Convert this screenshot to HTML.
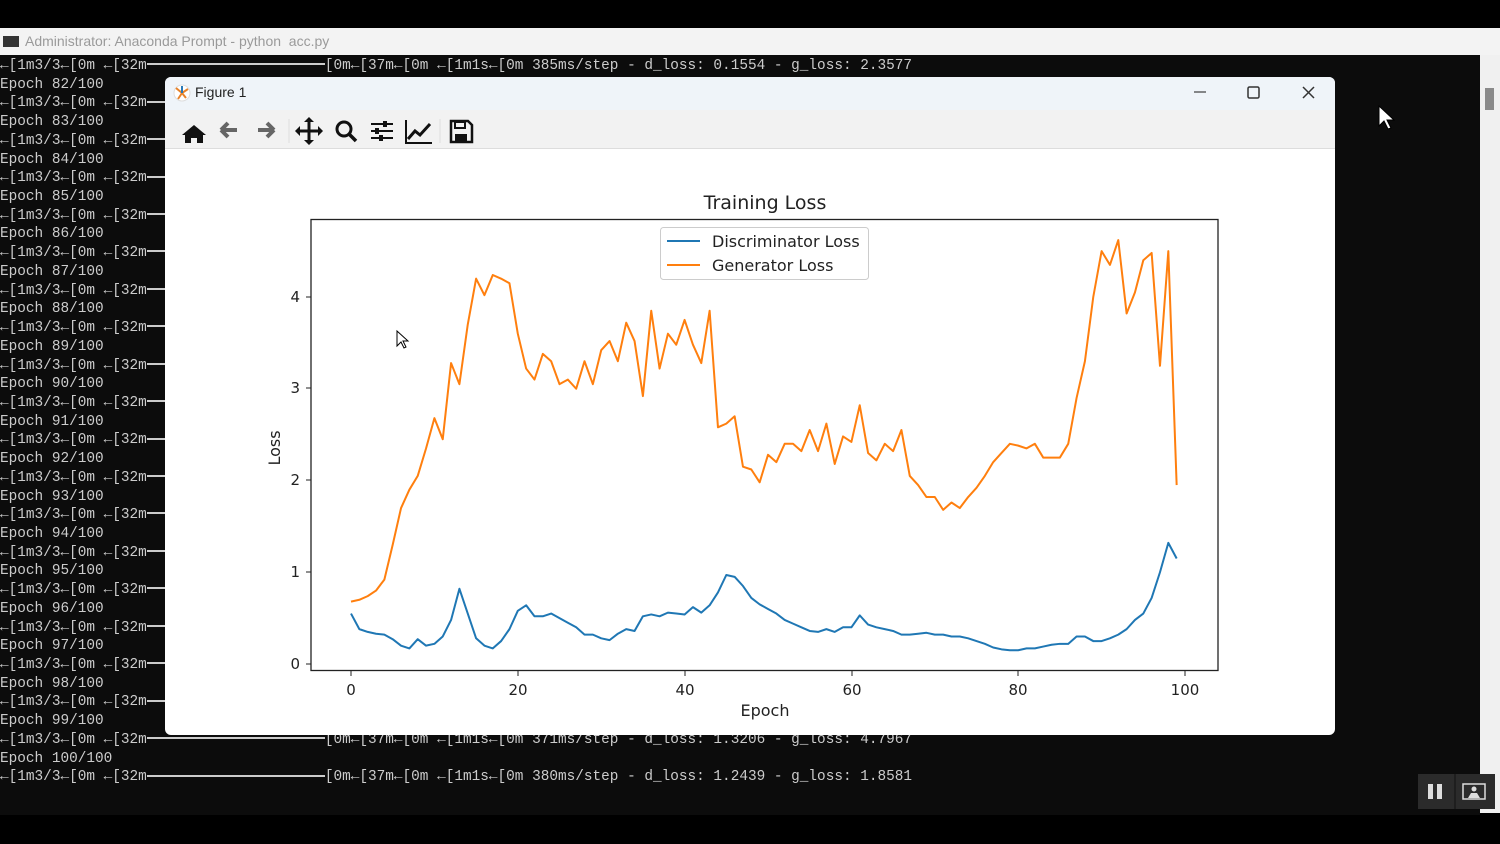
<!DOCTYPE html>
<html><head><meta charset="utf-8"><style>
*{margin:0;padding:0;box-sizing:border-box}
body{width:1500px;height:844px;background:#000;position:relative;overflow:hidden;font-family:"Liberation Sans",sans-serif}
#tb{position:absolute;left:0;top:28px;width:1500px;height:27px;background:#f3f3f3}
#tb .t{position:absolute;left:25px;top:5px;font-size:14px;color:#9a9a9a}
#tb .ic{position:absolute;left:3px;top:8px;width:16px;height:11px;background:#333}
#term{position:absolute;left:0;top:55px;width:1480px;height:760px;background:#0c0c0c}
#sb{position:absolute;left:1480px;top:55px;width:20px;height:758px;background:#f0f0f0}
#sb div{position:absolute;left:5px;top:33px;width:9px;height:22px;background:#8a8a8a}
.ln{position:absolute;left:0;font-family:"Liberation Mono",monospace;font-size:14.4px;color:#cccccc;white-space:pre;line-height:18px}
.bar{display:inline-block;width:178px;height:2px;background:#ccc;vertical-align:middle;margin-top:-2px}
#fig{position:absolute;left:165px;top:77px;width:1170px;height:658px;background:#fff;border-radius:6px;overflow:hidden}
#ft{height:33px;background:#eff4f9;position:relative}
#ft .n{position:absolute;left:30px;top:7px;font-size:14px;color:#222;font-family:"Liberation Sans",sans-serif}
#tool{height:39px;background:#f2f2f2;border-bottom:1px solid #ddd;position:relative}
.mono{font-family:"DejaVu Sans",sans-serif}
</style></head><body>
<div id="tb"><div class="ic"></div><div class="t">Administrator: Anaconda Prompt - python&nbsp; acc.py</div></div>
<div id="term"></div>
<div id="sb"><div></div></div>
<div id="lines"></div>
<script>
var h='';for(var i=0;i<39;i++){var y=57+i*18.72;var s;
if(i%2==1){s='Epoch '+(82+(i-1)/2)+'/100';}
else{var tail='';
if(i==0)tail='[0m←[37m←[0m ←[1m1s←[0m 385ms/step - d_loss: 0.1554 - g_loss: 2.3577';
else if(i==36)tail='[0m←[37m←[0m ←[1m1s←[0m 371ms/step - d_loss: 1.3206 - g_loss: 4.7967';
else if(i==38)tail='[0m←[37m←[0m ←[1m1s←[0m 380ms/step - d_loss: 1.2439 - g_loss: 1.8581';
s='←[1m3/3←[0m ←[32m<span class="bar"></span>'+tail;}
h+='<div class="ln" style="top:'+y+'px">'+s+'</div>';}
document.getElementById('lines').innerHTML=h;
</script>
<div id="fig">
<div id="ft"><svg style="position:absolute;left:8px;top:7px" width="18" height="18"><circle cx="9" cy="9" r="8" fill="#fff" stroke="#ddd"/><path d="M9 9L3 4M9 9L15 5M9 9L5 15M9 9L13 14" stroke="#e8832a" stroke-width="2"/><path d="M9 9L9 2" stroke="#2a7ab8" stroke-width="2"/></svg><div class="n">Figure 1</div>
<svg style="position:absolute;left:1027px;top:8px" width="130" height="18"><path d="M2 7h12" stroke="#444" stroke-width="1.2"/><rect x="56" y="2" width="11" height="11" rx="1.5" fill="none" stroke="#333" stroke-width="1.5"/><path d="M111 2l11 11M122 2l-11 11" stroke="#333" stroke-width="1.5"/></svg></div>
<div id="tool"><svg width="320" height="39">
<path d="M29 15l12 10h-3v8h-6v-5h-6v5h-6v-8h-3z" fill="#111"/>
<path d="M56 20h16M56 20l7-7M56 20l7 7" stroke="#666" stroke-width="4" fill="none"/>
<path d="M109 20h-16M109 20l-7-7M109 20l-7 7" stroke="#666" stroke-width="4" fill="none"/>
<line x1="124" y1="9" x2="124" y2="33" stroke="#ddd"/>
<path d="M144 9v24M132 21h24" stroke="#111" stroke-width="3"/><path d="M144 7l-5 5h10zM144 35l-5-5h10zM130 21l5-5v10zM158 21l-5-5v10z" fill="#111"/>
<circle cx="179" cy="19" r="7" fill="none" stroke="#111" stroke-width="3"/><path d="M184 24l7 7" stroke="#111" stroke-width="3.5"/>
<path d="M206 14h22M206 21h22M206 28h22" stroke="#111" stroke-width="2"/><rect x="218" y="11" width="4" height="6" fill="#111"/><rect x="210" y="18" width="4" height="6" fill="#111"/><rect x="214" y="25" width="4" height="6" fill="#111"/>
<path d="M241 10v23h26" stroke="#111" stroke-width="2" fill="none"/><path d="M243 29l7-8 5 4 10-11" stroke="#111" stroke-width="3" fill="none"/>
<line x1="275" y1="9" x2="275" y2="33" stroke="#ddd"/>
<path d="M286 11h17l4 4v17h-21z" fill="none" stroke="#111" stroke-width="2.5"/><rect x="290" y="12" width="10" height="6" fill="none" stroke="#111" stroke-width="2"/><rect x="290" y="24" width="12" height="7" fill="#111"/>
</svg></div>
</div>
<svg style="position:absolute;left:0;top:0" width="1500" height="844" class="mono">
<text x="765" y="209" font-size="19" text-anchor="middle" fill="#222">Training Loss</text>
<rect x="311" y="219.5" width="907" height="451" fill="none" stroke="#222" stroke-width="1.3"/>
<g font-size="15" fill="#222" text-anchor="middle">
<text x="351" y="695">0</text><text x="518" y="695">20</text><text x="685" y="695">40</text><text x="852" y="695">60</text><text x="1018" y="695">80</text><text x="1185" y="695">100</text>
</g>
<g stroke="#222"><path d="M351 671v5M518 671v5M685 671v5M852 671v5M1018 671v5M1185 671v5M311 664h-5M311 572h-5M311 480h-5M311 388h-5M311 297h-5"/></g>
<g font-size="15" fill="#222" text-anchor="end"><text x="300" y="669">0</text><text x="300" y="577">1</text><text x="300" y="485">2</text><text x="300" y="393">3</text><text x="300" y="302">4</text></g>
<text x="765" y="716" font-size="16" text-anchor="middle" fill="#222">Epoch</text>
<text transform="translate(280,448) rotate(-90)" font-size="16" text-anchor="middle" fill="#222">Loss</text>
<g transform="translate(351,664) scale(8.34,-91.75)" fill="none" stroke-width="2" stroke-linejoin="round">
<polyline vector-effect="non-scaling-stroke" stroke="#ff7f0e" points="0,0.68 1,0.7 2,0.74 3,0.8 4,0.92 5,1.3 6,1.7 7,1.9 8,2.05 9,2.35 10,2.68 11,2.45 12,3.28 13,3.05 14,3.7 15,4.2 16,4.02 17,4.24 18,4.2 19,4.15 20,3.6 21,3.22 22,3.1 23,3.38 24,3.3 25,3.05 26,3.1 27,3.0 28,3.3 29,3.05 30,3.42 31,3.52 32,3.3 33,3.72 34,3.52 35,2.92 36,3.85 37,3.22 38,3.6 39,3.48 40,3.75 41,3.48 42,3.28 43,3.85 44,2.58 45,2.62 46,2.7 47,2.15 48,2.12 49,1.98 50,2.28 51,2.2 52,2.4 53,2.4 54,2.32 55,2.55 56,2.32 57,2.62 58,2.18 59,2.48 60,2.42 61,2.82 62,2.3 63,2.22 64,2.4 65,2.32 66,2.55 67,2.05 68,1.95 69,1.82 70,1.82 71,1.68 72,1.76 73,1.7 74,1.82 75,1.92 76,2.05 77,2.2 78,2.3 79,2.4 80,2.38 81,2.35 82,2.4 83,2.25 84,2.25 85,2.25 86,2.4 87,2.9 88,3.3 89,4.0 90,4.5 91,4.35 92,4.62 93,3.82 94,4.05 95,4.4 96,4.48 97,3.25 98,4.5 99,1.95"/>
<polyline vector-effect="non-scaling-stroke" stroke="#1f77b4" points="0,0.55 1,0.38 2,0.35 3,0.33 4,0.32 5,0.27 6,0.2 7,0.17 8,0.27 9,0.2 10,0.22 11,0.3 12,0.48 13,0.82 14,0.55 15,0.28 16,0.2 17,0.17 18,0.25 19,0.38 20,0.58 21,0.64 22,0.52 23,0.52 24,0.55 25,0.5 26,0.45 27,0.4 28,0.32 29,0.32 30,0.28 31,0.26 32,0.33 33,0.38 34,0.36 35,0.52 36,0.54 37,0.52 38,0.56 39,0.55 40,0.54 41,0.62 42,0.56 43,0.64 44,0.78 45,0.97 46,0.95 47,0.85 48,0.72 49,0.65 50,0.6 51,0.55 52,0.48 53,0.44 54,0.4 55,0.36 56,0.35 57,0.38 58,0.35 59,0.4 60,0.4 61,0.53 62,0.43 63,0.4 64,0.38 65,0.36 66,0.32 67,0.32 68,0.33 69,0.34 70,0.32 71,0.32 72,0.3 73,0.3 74,0.28 75,0.25 76,0.22 77,0.18 78,0.16 79,0.15 80,0.15 81,0.17 82,0.17 83,0.19 84,0.21 85,0.22 86,0.22 87,0.3 88,0.3 89,0.25 90,0.25 91,0.28 92,0.32 93,0.38 94,0.48 95,0.55 96,0.72 97,1.0 98,1.32 99,1.15"/>
</g>
<rect x="660.5" y="227.5" width="208" height="52" rx="3" fill="#fff" fill-opacity="0.85" stroke="#ccc"/>
<path d="M667 241h33" stroke="#1f77b4" stroke-width="2"/><path d="M667 265h33" stroke="#ff7f0e" stroke-width="2"/>
<text x="712" y="247" font-size="16" fill="#222">Discriminator Loss</text>
<text x="712" y="271" font-size="16" fill="#222">Generator Loss</text>
<path d="M397 331v15l4-4 3 6 2-1-3-6h5z" fill="#fff" stroke="#000"/>
<path d="M1379 106v20l5-5 4 8 3-1-4-8h7z" fill="#fff" stroke="#000"/>
</svg>
<div style="position:absolute;left:0;top:815px;width:1500px;height:29px;background:#000"></div>
<div style="position:absolute;left:1418px;top:774px;width:77px;height:35px;background:#2b2b2b"></div>
<svg style="position:absolute;left:1418px;top:774px" width="77" height="35"><rect x="10" y="10" width="5" height="15" fill="#ddd"/><rect x="19" y="10" width="5" height="15" fill="#ddd"/><line x1="37" y1="0" x2="37" y2="35" stroke="#111"/><rect x="45" y="10" width="22" height="15" fill="none" stroke="#ddd" stroke-width="1.5"/><circle cx="56" cy="15" r="2.5" fill="#ddd"/><path d="M50 24l3-5h6l3 5z" fill="#ddd"/></svg>
</body></html>
